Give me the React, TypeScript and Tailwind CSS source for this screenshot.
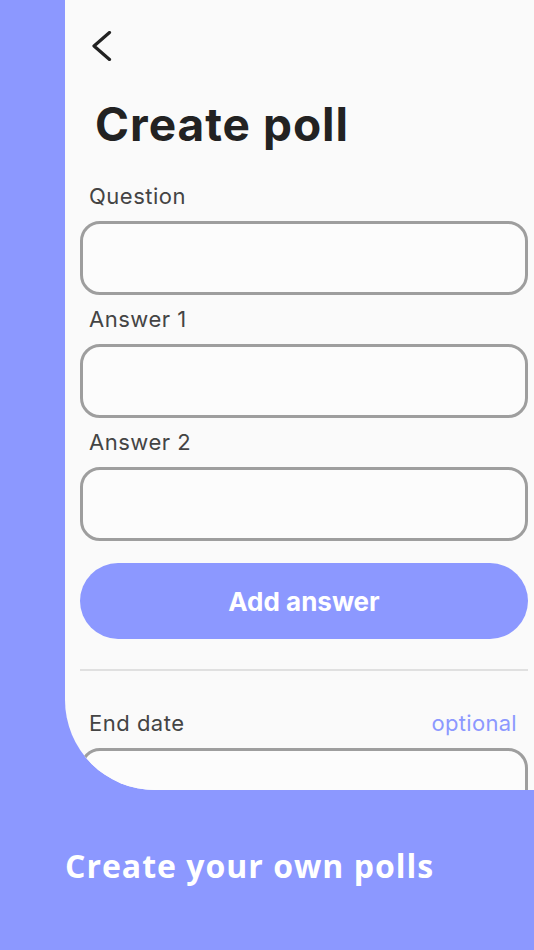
import React from "react";

const purple = "bg-[#8c98ff]";

function Field({ label, right }: { label: string; right?: string }) {
    return (
        <div className="flex flex-col">
            <div className="flex items-center justify-between pl-[9px] pr-[11px] h-[28px] text-[22px] leading-[28px] tracking-[0.5px] text-[#444]">
                <span>{label}</span>
                {right && <span className="text-[#8c98ff] tracking-[0.3px]">{right}</span>}
            </div>
            <div className="mt-[11px] h-[74px] rounded-[20px] border-[3px] border-[#9e9e9e] bg-[#fcfcfc]" />
        </div>
    );
}

export default function App() {
    return (
        <div className={`h-[950px] w-full flex flex-col overflow-hidden ${purple}`} style={{ fontFamily: "Inter, 'Noto Sans', sans-serif" }}>
            {/* Phone panel */}
            <div className="ml-[65px] h-[790px] shrink-0 overflow-hidden rounded-bl-[90px] bg-[#fafafa] pl-[15px] pr-[6px]">
                <div className="pt-[31px] pl-[12px]">
                    <svg width="20" height="30" viewBox="0 0 20 30" fill="none">
                        <polyline points="17.5,1.5 2,15 17.5,28.5" stroke="#222" strokeWidth="3.2" strokeLinecap="round" strokeLinejoin="round" />
                    </svg>
                </div>

                <h1 className="mt-[36px] pl-[15px] text-[46px] leading-[54px] font-bold tracking-[1px] text-[#222]">Create poll</h1>

                <div className="mt-[31px] flex flex-col gap-[10px]">
                    <Field label="Question" />
                    <Field label="Answer 1" />
                    <Field label="Answer 2" />
                </div>

                <button className={`mt-[22px] h-[76px] w-full rounded-full ${purple} text-white text-[26px] font-bold`}>
                    Add answer
                </button>

                <div className="mt-[30px] h-[2px] bg-[#e0e0e0]" />

                <div className="mt-[38px]">
                    <Field label="End date" right="optional" />
                </div>
            </div>

            <div className="mt-[56px] pl-[65px] text-[32px] leading-[40px] font-bold tracking-[1px] text-white" style={{ fontFamily: "'Open Sans', Lato, sans-serif" }}>
                Create your own polls
            </div>
        </div>
    );
}
